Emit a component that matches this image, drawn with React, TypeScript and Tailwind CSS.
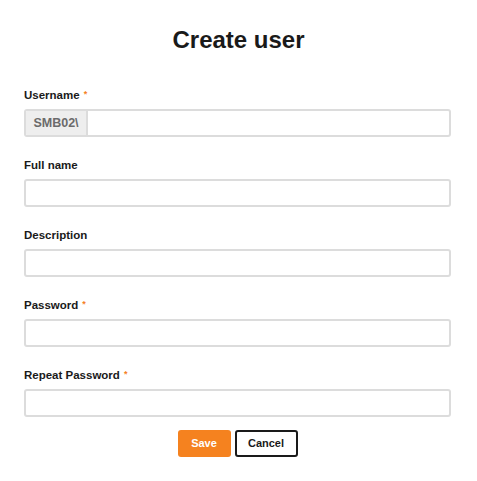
import React from 'react';

type FieldProps = {
  label: string;
  required?: boolean;
  prefix?: string;
  type?: string;
};

function Field({ label, required, prefix, type = 'text' }: FieldProps) {
  return (
    <div className="flex flex-col mb-[21px]">
      <label className="h-[14px] leading-[14px] text-[11.5px] font-bold text-[#1a1a1a] mb-[7px]">
        {label}
        {required && <span className="text-[#f5821f] ml-[4px] relative top-[-2px] text-[9px]">*</span>}
      </label>
      <div className="flex h-[28px] border-2 border-[#dcdcdc] rounded-[3px] bg-white overflow-hidden">
        {prefix && (
          <span className="w-[62px] flex items-center justify-center bg-[#eeeeee] border-r-2 border-[#dcdcdc] text-[12.5px] font-bold text-[#6b6b6b]">
            {prefix}
          </span>
        )}
        <input type={type} className="flex-1 outline-none px-2 text-[12px]" />
      </div>
    </div>
  );
}

export default function App() {
  return (
    <div
      className="w-[477px] h-[481px] bg-white px-[24px] pt-[24px]"
      style={{ fontFamily: '"Liberation Sans", Arial, sans-serif' }}
    >
      <h1 className="text-center text-[24px] leading-[32px] font-bold text-[#1a1a1a] mb-[32px]">
        Create user
      </h1>
      <div className="w-[427px]">
        <Field label="Username" required prefix="SMB02\" />
        <Field label="Full name" />
        <Field label="Description" />
        <Field label="Password" required type="password" />
        <div className="mb-[-8px]">
          <Field label="Repeat Password" required type="password" />
        </div>
        <div className="flex justify-center gap-[4px]">
          <button className="w-[53px] h-[27px] bg-[#f5821f] rounded-[3px] text-white text-[11px] font-bold">
            Save
          </button>
          <button className="w-[63px] h-[27px] bg-white border-2 border-[#1a1a1a] rounded-[3px] text-[#1a1a1a] text-[11px] font-bold">
            Cancel
          </button>
        </div>
      </div>
    </div>
  );
}
